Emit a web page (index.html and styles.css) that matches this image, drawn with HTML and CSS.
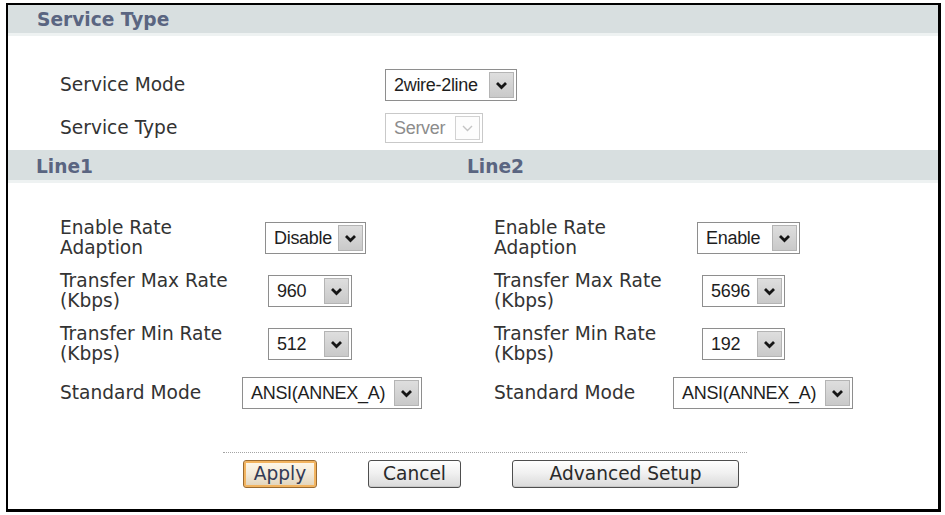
FILE: index.html
```html
<!DOCTYPE html>
<html>
<head>
<meta charset="utf-8">
<link rel="stylesheet" href="styles.css">
</head>
<body>
<div class="frame">
  <div class="band band-top">Service Type</div>
  <div class="sec1">
    <div class="row1 row-mode">
      <span class="lbl lbl-wide">Service Mode</span>
      <div class="sel sel-mode"><span class="val">2wire-2line</span><span class="arr"><svg width="13" height="9" viewBox="0 0 13 9"><polyline points="2,2 6.5,6.5 11,2" fill="none" stroke="#151515" stroke-width="2.8"/></svg></span></div>
    </div>
    <div class="row1 row-type">
      <span class="lbl lbl-wide">Service Type</span>
      <div class="sel sel-server disabled"><span class="val">Server</span><span class="arr"><svg width="13" height="9" viewBox="0 0 13 9"><polyline points="2,2 6.5,6.5 11,2" fill="none" stroke="#c4c4c4" stroke-width="1.4"/></svg></span></div>
    </div>
  </div>
  <div class="band band-line"><span class="bcol">Line1</span><span>Line2</span></div>
  <div class="sec2">
    <div class="col">
      <div class="row2">
        <span class="lbl lbl-a">Enable Rate<br>Adaption</span>
        <div class="sel sel-disable"><span class="val">Disable</span><span class="arr"><svg width="13" height="9" viewBox="0 0 13 9"><polyline points="2,2 6.5,6.5 11,2" fill="none" stroke="#151515" stroke-width="2.8"/></svg></span></div>
      </div>
      <div class="row2">
        <span class="lbl lbl-b">Transfer Max Rate<br>(Kbps)</span>
        <div class="sel sel-num"><span class="val">960</span><span class="arr"><svg width="13" height="9" viewBox="0 0 13 9"><polyline points="2,2 6.5,6.5 11,2" fill="none" stroke="#151515" stroke-width="2.8"/></svg></span></div>
      </div>
      <div class="row2">
        <span class="lbl lbl-b">Transfer Min Rate<br>(Kbps)</span>
        <div class="sel sel-num"><span class="val">512</span><span class="arr"><svg width="13" height="9" viewBox="0 0 13 9"><polyline points="2,2 6.5,6.5 11,2" fill="none" stroke="#151515" stroke-width="2.8"/></svg></span></div>
      </div>
      <div class="row2 row-last">
        <span class="lbl lbl-d">Standard Mode</span>
        <div class="sel sel-ansi"><span class="val">ANSI(ANNEX_A)</span><span class="arr"><svg width="13" height="9" viewBox="0 0 13 9"><polyline points="2,2 6.5,6.5 11,2" fill="none" stroke="#151515" stroke-width="2.8"/></svg></span></div>
      </div>
    </div>
    <div class="col">
      <div class="row2">
        <span class="lbl lbl-a2">Enable Rate<br>Adaption</span>
        <div class="sel sel-enable"><span class="val">Enable</span><span class="arr"><svg width="13" height="9" viewBox="0 0 13 9"><polyline points="2,2 6.5,6.5 11,2" fill="none" stroke="#151515" stroke-width="2.8"/></svg></span></div>
      </div>
      <div class="row2">
        <span class="lbl lbl-b">Transfer Max Rate<br>(Kbps)</span>
        <div class="sel sel-num2"><span class="val">5696</span><span class="arr"><svg width="13" height="9" viewBox="0 0 13 9"><polyline points="2,2 6.5,6.5 11,2" fill="none" stroke="#151515" stroke-width="2.8"/></svg></span></div>
      </div>
      <div class="row2">
        <span class="lbl lbl-b">Transfer Min Rate<br>(Kbps)</span>
        <div class="sel sel-num2"><span class="val">192</span><span class="arr"><svg width="13" height="9" viewBox="0 0 13 9"><polyline points="2,2 6.5,6.5 11,2" fill="none" stroke="#151515" stroke-width="2.8"/></svg></span></div>
      </div>
      <div class="row2 row-last">
        <span class="lbl lbl-d2">Standard Mode</span>
        <div class="sel sel-ansi"><span class="val">ANSI(ANNEX_A)</span><span class="arr"><svg width="13" height="9" viewBox="0 0 13 9"><polyline points="2,2 6.5,6.5 11,2" fill="none" stroke="#151515" stroke-width="2.8"/></svg></span></div>
      </div>
    </div>
  </div>
  <div class="foot">
    <div class="btns">
      <button class="btn btn-apply">Apply</button>
      <button class="btn btn-cancel">Cancel</button>
      <button class="btn btn-adv">Advanced Setup</button>
    </div>
  </div>
</div>
</body>
</html>
```

FILE: styles.css
```css
html, body {
  margin: 0;
  padding: 0;
  background: #ffffff;
}

body {
  font-family: "DejaVu Sans", Verdana, sans-serif;
  color: #353535;
}

.frame {
  margin: 3px 0 0 6px;
  width: 930px;
  height: 504px;
  border: 2px solid #000;
  border-right-width: 3px;
  border-bottom-width: 3px;
  background: #fff;
}

.band {
  background: #d8dfe0;
  border-bottom: 3px solid #eef2f2;
  color: #5a6581;
  font-weight: bold;
  font-size: 18.6px;
}

.band-top {
  height: 28px;
  line-height: 30px;
  padding-left: 29px;
}

.band-line {
  display: flex;
  height: 26px;
  padding-top: 4px;
  line-height: 26px;
  padding-left: 28px;
}

.bcol {
  width: 431px;
}

.sec1 {
  display: flex;
  flex-direction: column;
  gap: 12px;
  padding: 33px 0 7px 52px;
}

.row1 {
  display: flex;
  align-items: center;
}

.row-mode { height: 32px; }
.row-type { height: 30px; }

.lbl {
  font-size: 18.6px;
  line-height: 20px;
  color: #333333;
  flex: none;
}

.lbl-wide { width: 325px; }
.lbl-a { width: 205px; }
.lbl-a2 { width: 203px; }
.lbl-b { width: 208px; }
.lbl-d { width: 182px; }
.lbl-d2 { width: 179px; }

.sec2 {
  display: grid;
  grid-template-columns: 434px 434px;
  padding: 35px 0 0 52px;
}

.col {
  display: flex;
  flex-direction: column;
  gap: 13px;
}

.row2 {
  display: flex;
  align-items: center;
  height: 40px;
}

.row2.row-last {
  height: 32px;
}

.sel {
  box-sizing: border-box;
  height: 32px;
  display: flex;
  align-items: center;
  justify-content: space-between;
  border: 1px solid #8e8e8e;
  background: #fff;
  font-family: "Liberation Sans", Arial, sans-serif;
  font-size: 18px;
  letter-spacing: -0.3px;
  color: #1e1e1e;
  padding: 2px 2px 2px 8px;
  flex: none;
}

.sel .val {
  white-space: nowrap;
}

.arr {
  box-sizing: border-box;
  width: 25px;
  height: 100%;
  display: flex;
  align-items: center;
  justify-content: center;
  background: linear-gradient(#dedede, #c9c9c9);
  border: 1px solid #b4b4b4;
  flex: none;
}

.sel-mode { width: 132px; }
.sel-server { width: 98px; height: 30px; }
.sel-disable { width: 101px; }
.sel-enable { width: 103px; }
.sel-num { width: 84px; }
.sel-num2 { width: 83px; }
.sel-ansi { width: 180px; }

.sel.disabled {
  border-color: #c9c9c9;
  color: #8c8c8c;
}

.sel.disabled .arr {
  background: #fdfdfd;
  border-color: #d2d2d2;
}

.foot {
  margin: 43px 0 0 215px;
  width: 524px;
  border-top: 1px dotted #a4a4a4;
}

.btns {
  display: flex;
  gap: 51px;
  padding: 7px 0 0 20px;
}

.btn {
  box-sizing: border-box;
  height: 28px;
  padding: 0;
  font-family: "DejaVu Sans", Verdana, sans-serif;
  font-size: 18.6px;
  line-height: 26px;
  color: #2a2a2a;
  border: 1px solid #4e4e4e;
  border-radius: 3px;
  background: linear-gradient(#ffffff, #f1f1f1 45%, #dadada);
  box-shadow: inset 0 -1px 0 #c8c8c8;
}

.btn-apply {
  width: 74px;
  border-color: #9a6a30;
  background: linear-gradient(#fff8ea, #f3ead9 50%, #e0d2b8);
  box-shadow: inset 0 0 0 2px #f2b460;
  color: #333a55;
}

.btn-cancel { width: 93px; }
.btn-adv { width: 227px; }
```
